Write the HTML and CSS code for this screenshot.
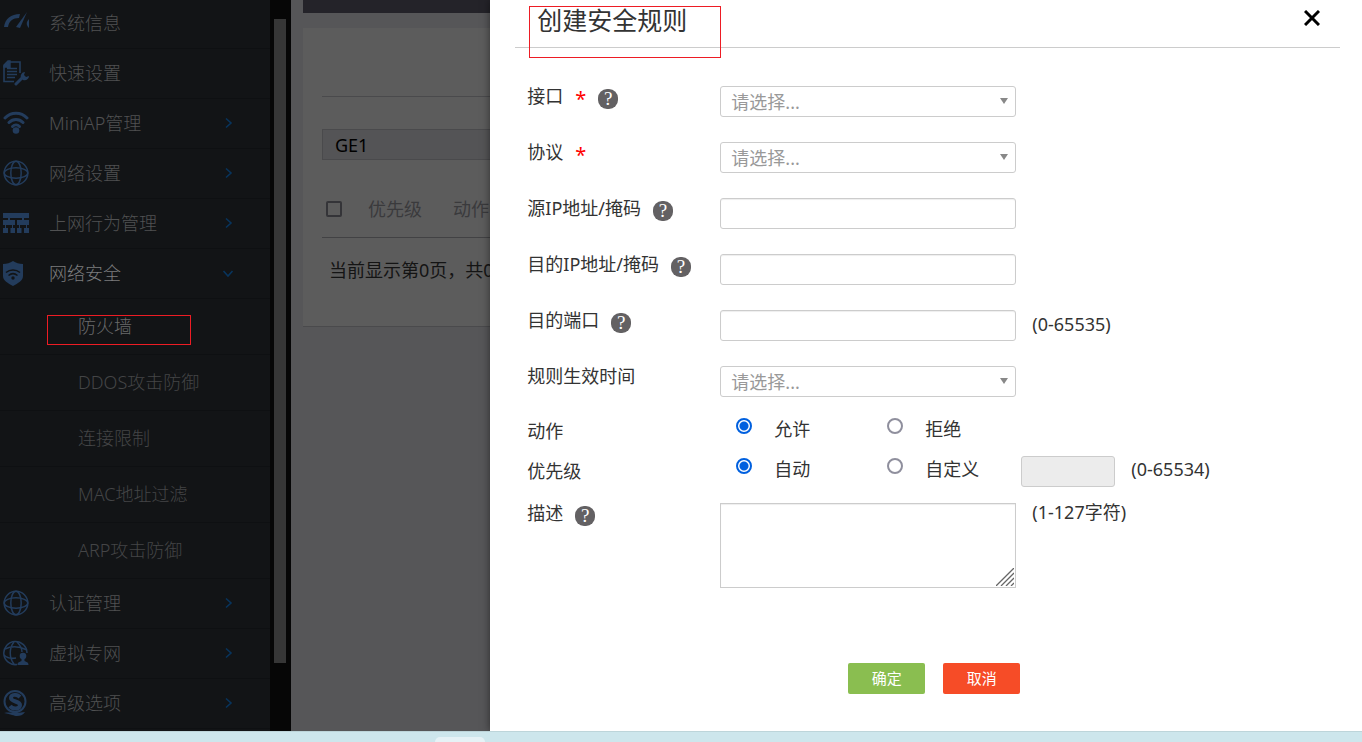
FILE: index.html
```html
<!DOCTYPE html>
<html lang="zh-CN">
<head>
  <meta charset="UTF-8">
  <title>创建安全规则</title>
  <link rel="stylesheet" href="styles.css">
</head>
<body>

  <!-- shared icons -->
  <svg class="defs" width="0" height="0">
    <symbol id="globe" viewBox="0 0 26 26">
      <g fill="none" stroke="currentColor" stroke-width="1.5">
        <circle cx="13" cy="13" r="11.8"/>
        <ellipse cx="13" cy="13" rx="5.2" ry="11.8"/>
        <ellipse cx="13" cy="13" rx="11.8" ry="5.2"/>
      </g>
    </symbol>
    <symbol id="arrow" viewBox="0 0 12 12">
      <path d="M4 1.500L9 6l-5 4.500" fill="none" stroke="currentColor" stroke-width="1.6"/>
    </symbol>
  </svg>

  <div class="app">
    <nav class="sidebar">
      <ul class="menu">
        <li><a href="#">
          <svg class="icon" viewBox="0 0 26 26"><path d="M1 17C2 9 8 4 17 4l-1 4C10 8 6 11 5 17z" fill="currentColor"/><path d="M24 2l-7 16-4-1z" fill="currentColor"/><path d="M26 9c-3 3-3 6 0 9z" fill="currentColor"/></svg>
          系统信息</a></li>
        <li><a href="#">
          <svg class="icon" viewBox="0 0 26 26"><path d="M11 21.500H1V6l4-4h12v11" fill="none" stroke="currentColor" stroke-width="1.6"/><path d="M1 7V5l4-4h2v6zM4 8.500h10M4 11.500h10M4 14.500h10M4 17.500h8" fill="currentColor" stroke="currentColor" stroke-width="1.400"/><path d="M13 24l7-7" stroke="currentColor" stroke-width="3" stroke-linecap="round"/><path d="M18 18c-1-3 1-6 4-6l-1 3 2 2 3-1c0 3-3 5-6 4z" fill="currentColor"/></svg>
          快速设置</a></li>
        <li><a href="#">
          <svg class="icon" viewBox="0 0 26 26"><g fill="none" stroke="currentColor" stroke-width="3" stroke-linecap="round"><path d="M2 8c6-6.500 16-6.500 22 0M6 12.500c4-4 10-4 14 0"/><path d="M9.500 16.500c2-2 5-2 7 0"/></g><circle cx="13" cy="20.500" r="3.300" fill="currentColor"/></svg>
          MiniAP管理<svg class="arrow"><use href="#arrow"/></svg></a></li>
        <li><a href="#"><svg class="icon"><use href="#globe"/></svg>网络设置<svg class="arrow"><use href="#arrow"/></svg></a></li>
        <li><a href="#">
          <svg class="icon" viewBox="0 0 26 26" fill="currentColor"><path d="M0 3h26v5H0zM0 10h12v5H0zM14 10h12v5H14zM0 18h5v5H0zM7.500 18h4.500v5H7.500zM14 18h4.500v5H14zM21 18h5v5h-5zM5 8h2v2H5zM19 8h2v2h-2zM2 15h1v3H2zM9 15h1v3H9zM16 15h1v3h-1zM23 15h1v3h-1z"/></svg>
          上网行为管理<svg class="arrow"><use href="#arrow"/></svg></a></li>
        <li class="open"><a href="#">
          <svg class="icon" viewBox="0 0 26 26"><path d="M10 1c3 2 6 3 10 3v12c0 5-5 7-10 10C5 23 0 21 0 16V4c4 0 7-1 10-3z" fill="currentColor"/><g fill="none" stroke="#121416" stroke-width="1.500"><path d="M3 12.500c4-3.500 10-3.500 14 0M5.500 15.500c3-2.500 6-2.500 9 0"/></g><circle cx="10" cy="18" r="1.700" fill="#121416"/></svg>
          网络安全<svg class="arrow"><use href="#arrow"/></svg></a>
          <ul class="submenu">
            <li class="current"><a href="#">防火墙</a></li>
            <li><a href="#">DDOS攻击防御</a></li>
            <li><a href="#">连接限制</a></li>
            <li><a href="#">MAC地址过滤</a></li>
            <li><a href="#">ARP攻击防御</a></li>
          </ul>
        </li>
        <li><a href="#"><svg class="icon"><use href="#globe"/></svg>认证管理<svg class="arrow"><use href="#arrow"/></svg></a></li>
        <li><a href="#">
          <svg class="icon" viewBox="0 0 26 26"><g fill="none" stroke="currentColor" stroke-width="1.500"><path d="M14 24.500A11.600 11.600 0 1 1 24 13"/><path d="M11 2C6 8 6 18 11 24M14 2c3 3 5 6 5 10M2 9c6-3 14-3 22 1M1 15c3 3 7 4 12 3"/></g><circle cx="20" cy="16" r="3.300" fill="currentColor"/><path d="M18.500 18h3v3c2 1 4 1 4 4h-11c0-3 2-3 4-4z" fill="currentColor"/></svg>
          虚拟专网<svg class="arrow"><use href="#arrow"/></svg></a></li>
        <li><a href="#">
          <svg class="icon" viewBox="0 0 26 26"><circle cx="12" cy="11.500" r="10.500" fill="none" stroke="currentColor" stroke-width="2"/><path d="M17 7C14 4 8 4 8 8s9 3 9 7-7 5-10 1" fill="none" stroke="currentColor" stroke-width="4"/><path d="M1 23c5-1 8 0 12 0s6-1 9-1c-2 3-5 4-8 4s-6-2-13-3z" fill="currentColor"/></svg>
          高级选项<svg class="arrow"><use href="#arrow"/></svg></a></li>
      </ul>
    </nav>
    <div class="scrollbar"><div class="thumb"></div></div>

    <main class="content">
      <div class="topbar"></div>
      <section class="panel">
        <div class="panel-head"></div>
        <select class="port" aria-label="GE1"><option>GE1</option></select>
        <table class="rules">
          <thead>
            <tr><th class="check"><input type="checkbox" aria-label="优先级"></th><th class="priority">优先级</th><th>动作</th></tr>
          </thead>
        </table>
        <p class="pager">当前显示第0页，共0</p>
      </section>
    </main>

    <section class="drawer">
      <header class="drawer-head">
        <h1>创建安全规则</h1>
        <button class="close" type="button" aria-label="关闭">
          <svg viewBox="0 0 16 16"><path d="M1 1l14 14M15 1L1 15" stroke="#000" stroke-width="3"/></svg>
        </button>
      </header>

      <form class="form">
        <div class="fields">
          <div class="row">
            <div class="name"><label for="port">接口</label><span class="star">*</span><span class="help">?</span></div>
            <div class="select"><select id="port"><option>请选择...</option></select></div>
          </div>
          <div class="row">
            <div class="name"><label for="protocol">协议</label><span class="star">*</span></div>
            <div class="select"><select id="protocol"><option>请选择...</option></select></div>
          </div>
          <div class="row">
            <div class="name"><label for="src">源IP地址/掩码</label><span class="help">?</span></div>
            <input class="text" id="src" type="text">
          </div>
          <div class="row">
            <div class="name"><label for="dst">目的IP地址/掩码</label><span class="help">?</span></div>
            <input class="text" id="dst" type="text">
          </div>
          <div class="row">
            <div class="name"><label for="dport">目的端口</label><span class="help">?</span></div>
            <input class="text" id="dport" type="text">
            <span class="hint">(0-65535)</span>
          </div>
          <div class="row">
            <div class="name"><label for="time">规则生效时间</label></div>
            <div class="select"><select id="time"><option>请选择...</option></select></div>
          </div>
        </div>

        <div class="choices">
          <div class="row">
            <div class="name">动作</div>
            <label class="option"><input type="radio" name="action" checked>允许</label>
            <label class="option"><input type="radio" name="action">拒绝</label>
          </div>
          <div class="row">
            <div class="name">优先级</div>
            <label class="option"><input type="radio" name="priority" checked>自动</label>
            <label class="option custom"><input type="radio" name="priority">自定义</label>
            <input class="text short" type="text" aria-label="自定义" disabled>
            <span class="hint">(0-65534)</span>
          </div>
        </div>

        <div class="row">
          <div class="name"><label for="desc">描述</label><span class="help">?</span></div>
          <div class="area">
            <textarea id="desc"></textarea>
            <svg class="grip" viewBox="0 0 18 18"><path d="M0 18L18 0M5 18L18 5M10 18l8-8M15 18l3-3" stroke="#666" stroke-width="1.300"/></svg>
          </div>
          <span class="hint top">(1-127字符)</span>
        </div>

        <div class="actions">
          <button class="btn ok" type="button">确定</button>
          <button class="btn cancel" type="button">取消</button>
        </div>
      </form>
    </section>
  </div>

  <footer class="taskbar"><div class="task"></div></footer>

</body>
</html>
```
FILE: styles.css
```css
*, *::before, *::after {
  box-sizing: border-box;
}

body {
  margin: 0;
  height: 100vh;
  display: flex;
  flex-direction: column;
  overflow: hidden;
  font: 18px/20px "Noto Sans", "Noto Sans CJK SC", sans-serif;
  color: #333;
}

input, select, textarea, button {
  font: inherit;
  margin: 0;
}

.defs {
  position: absolute;
}

.app {
  flex: 1;
  min-height: 0;
  display: flex;
  position: relative;
  overflow: hidden;
}

/* left menu */
.sidebar {
  width: 270px;
  flex: none;
  overflow: hidden;
  background: #121416;
}

.menu, .submenu {
  list-style: none;
  margin: 0;
  padding: 0;
}

.menu {
  margin-top: -1px;
}

.menu a {
  display: flex;
  align-items: center;
  height: 50px;
  padding: 0 36px 1px 3px;
  gap: 20px;
  border-bottom: 1px solid #0e1012;
  color: #505152;
  font-weight: 300;
  text-decoration: none;
}

.menu .open > a {
  color: #7c7d7e;
}

.menu .submenu a {
  height: 56px;
  padding-left: 78px;
  color: #444546;
}

.menu .submenu .current a {
  color: #6a6b6c;
}

.current {
  position: relative;
}

/* red marker frames */
.current::after, .drawer-head::after {
  content: "";
  position: absolute;
  border: 1px solid #ed1c24;
}

.current::after {
  left: 47px;
  top: 16px;
  width: 144px;
  height: 30px;
}

.icon {
  width: 26px;
  height: 26px;
  flex: none;
  color: #233c5c;
}

.arrow {
  width: 12px;
  height: 12px;
  margin-left: auto;
  color: #08345c;
}

.open > a .arrow {
  transform: rotate(90deg);
}

.scrollbar {
  width: 21px;
  flex: none;
  padding: 19px 5px 68px 4px;
  background: #060606;
}

.thumb {
  height: 100%;
  background: #363636;
}

/* page behind the drawer */
.content {
  flex: 1;
  padding-left: 12px;
  background: #565658;
}

.topbar {
  height: 13px;
  margin-bottom: 15px;
  background: #242329;
}

.panel {
  height: 299px;
  padding: 0 19px;
  background: #5c5c5c;
  border-bottom: 1px solid #4a4a4c;
}

.panel-head {
  height: 69px;
  margin-bottom: 32px;
  border-bottom: 1px solid #4a4a4c;
}

.port {
  appearance: none;
  display: block;
  width: 100%;
  height: 31px;
  padding: 0 12px;
  border: 1px solid #4a4a4c;
  border-radius: 0;
  background: #545456;
  color: #000;
}

.rules {
  width: 100%;
  margin-top: 22px;
  border-collapse: collapse;
  border-bottom: 1px solid #424244;
  color: #3a3a3c;
}

.rules th {
  height: 55px;
  padding: 0;
  text-align: left;
  font-weight: normal;
}

.rules .check {
  width: 46px;
  padding-left: 4px;
}

.rules .priority {
  width: 85px;
}

.rules input {
  appearance: none;
  display: block;
  width: 16px;
  height: 16px;
  border: 2px solid #343438;
  border-radius: 2px;
}

.pager {
  margin: 22px 7px 0;
  white-space: nowrap;
  color: #141414;
}

/* drawer */
.drawer {
  position: absolute;
  top: 0;
  right: 0;
  bottom: 0;
  width: 64%;
  padding: 0 22px 0 25px;
  background: #fff;
  box-shadow: 0 0 8px rgba(0, 0, 0, 0.5);
}

.drawer-head {
  position: relative;
  display: flex;
  justify-content: space-between;
  align-items: flex-start;
  height: 48px;
  padding: 0 20px 0 22px;
  border-bottom: 1px solid #ccc;
}

.drawer-head::after {
  left: 14px;
  top: 6px;
  width: 192px;
  height: 52px;
}

.drawer-head h1 {
  margin: 0;
  font-size: 25px;
  line-height: 40px;
  font-weight: normal;
}

.close {
  width: 16px;
  height: 16px;
  margin-top: 10px;
  padding: 0;
  border: 0;
  background: none;
}

.close svg {
  display: block;
}

.form {
  padding: 38px 0 0 12px;
}

.fields {
  display: grid;
  gap: 25px;
}

.row {
  display: flex;
  align-items: flex-start;
  min-height: 31px;
}

.name {
  display: flex;
  gap: 12px;
  width: 193px;
  flex: none;
}

.star {
  width: 11px;
  color: #f00;
  font-size: 20px;
  line-height: 26px;
}

.help {
  width: 20px;
  height: 20px;
  margin-top: 3px;
  border-radius: 9px;
  background: #636163;
  color: #fff;
  font: 19px/20px "Liberation Serif", serif;
  text-align: center;
}

.text, .select, .area {
  width: 296px;
  flex: none;
}

.text, .select select, .area textarea {
  height: 31px;
  padding: 0 10px;
  border: 1px solid #ccc;
  border-radius: 3px;
  background: #fff;
  box-shadow: inset 0 1px 1px rgba(0, 0, 0, 0.07);
}

.select, .area {
  position: relative;
}

.select select {
  appearance: none;
  display: block;
  width: 100%;
  color: #999;
  box-shadow: none;
}

.select::after {
  content: "";
  position: absolute;
  right: 8px;
  top: 12px;
  border: 4px solid transparent;
  border-top: 6px solid #888;
  border-bottom: 0;
}

.area textarea {
  display: block;
  width: 100%;
  height: 85px;
  border-radius: 0;
  resize: none;
}

.grip {
  position: absolute;
  right: 2px;
  bottom: 2px;
  width: 18px;
  height: 18px;
}

.hint {
  margin-left: 16px;
  line-height: 28px;
}

.hint.top {
  line-height: 18px;
}

.choices {
  display: grid;
  gap: 9px;
  margin: 19px 0 16px;
}

.choices .name {
  line-height: 31px;
}

.choices .hint {
  line-height: 26px;
}

.option {
  display: flex;
  gap: 22px;
  width: 151px;
  padding-left: 16px;
  line-height: 26px;
}

.option.custom {
  width: 150px;
}

.option input {
  appearance: none;
  width: 16px;
  height: 16px;
  margin-top: 2px;
  border: 2px solid #8f8f9d;
  border-radius: 50%;
  background: #fff;
}

.option input:checked {
  border-color: #0060df;
  background: radial-gradient(circle, #0060df 4px, #fff 5px);
}

.text.short {
  width: 94px;
  background: #ececec;
  box-shadow: none;
}

.actions {
  display: flex;
  gap: 18px;
  margin-top: 75px;
  padding-left: 321px;
}

.btn {
  width: 77px;
  height: 31px;
  padding: 0 0 2px;
  border: 0;
  border-radius: 2px;
  color: #fff;
  font-size: 15px;
}

.ok {
  background: #8abe50;
}

.cancel {
  background: #f64c27;
}

/* strip of the desktop taskbar */
.taskbar {
  height: 11px;
  flex: none;
  padding: 5px 0 0 435px;
  border-top: 1px solid #bdd5da;
  background: #cde6ec;
}

.task {
  width: 50px;
  height: 5px;
  border-radius: 5px 5px 0 0;
  background: #e6f2f6;
}
```
